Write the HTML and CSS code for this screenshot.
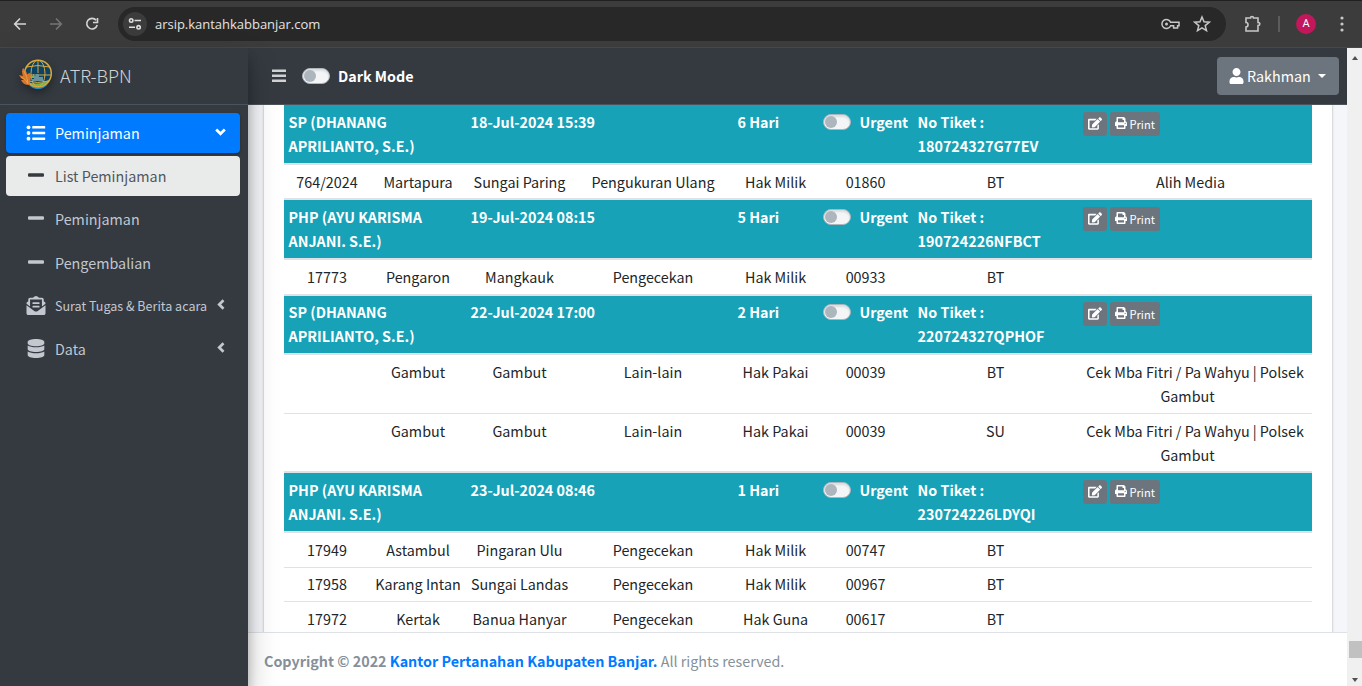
FILE: index.html
```html
<!DOCTYPE html>
<html lang="id">
<head>
<meta charset="utf-8">
<title>ATR-BPN</title>
<link rel="stylesheet" href="styles.css">
</head>
<body>
<svg class="sprite" width="0" height="0">
  <symbol id="user" viewBox="0 0 448 512"><path d="M224 256c70.7 0 128-57.3 128-128S294.7 0 224 0 96 57.3 96 128s57.3 128 128 128zm89.6 32h-16.7c-22.2 10.2-46.9 16-72.9 16s-50.6-5.8-72.9-16h-16.7C60.2 288 0 348.2 0 422.4V464c0 26.5 21.5 48 48 48h352c26.5 0 48-21.5 48-48v-41.6c0-74.2-60.2-134.4-134.4-134.4z"/></symbol>
  <symbol id="edit" viewBox="0 0 576 512"><path d="M402.6 83.2l90.2 90.2c3.8 3.8 3.8 10 0 13.8L274.4 405.6l-92.8 10.3c-12.4 1.4-22.9-9.1-21.5-21.5l10.3-92.8L388.8 83.2c3.8-3.8 10-3.8 13.8 0zm162-22.9l-48.8-48.8c-15.2-15.2-39.9-15.2-55.2 0l-35.4 35.4c-3.8 3.8-3.8 10 0 13.8l90.2 90.2c3.8 3.8 10 3.8 13.8 0l35.4-35.4c15.2-15.3 15.2-40 0-55.2zM384 346.2V448H64V128h229.8c3.2 0 6.2-1.3 8.5-3.5l40-40c7.6-7.6 2.2-20.5-8.500-20.500H48C21.500 64 0 85.500 0 112v352c0 26.500 21.500 48 48 48h352c26.500 0 48-21.500 48-48V306.200c0-10.700-12.900-16-20.500-8.500l-40 40c-2.200 2.300-3.500 5.300-3.500 8.500z"/></symbol>
  <symbol id="print" viewBox="0 0 512 512"><path d="M448 192V77.25c0-8.49-3.37-16.62-9.37-22.63L393.37 9.37c-6-6-14.14-9.37-22.63-9.37H96C78.33 0 64 14.33 64 32v160c-35.35 0-64 28.65-64 64v112c0 8.84 7.16 16 16 16h48v96c0 17.67 14.33 32 32 32h320c17.67 0 32-14.33 32-32v-96h48c8.84 0 16-7.16 16-16V256c0-35.35-28.65-64-64-64zm-64 256H128v-96h256v96zm0-224H128V64h192v48c0 8.84 7.16 16 16 16h48v96zm48 72c-13.25 0-24-10.75-24-24 0-13.26 10.75-24 24-24s24 10.74 24 24c0 13.25-10.75 24-24 24z"/></symbol>
  <symbol id="database" viewBox="0 0 448 512"><path d="M448 73.143v45.714C448 159.143 347.667 192 224 192S0 159.143 0 118.857V73.143C0 32.857 100.333 0 224 0s224 32.857 224 73.143zM448 176v102.857C448 319.143 347.667 352 224 352S0 319.143 0 278.857V176c48.125 33.143 136.208 48.572 224 48.572S399.874 209.143 448 176zm0 160v102.857C448 479.143 347.667 512 224 512S0 479.143 0 438.857V336c48.125 33.143 136.208 48.572 224 48.572S399.874 369.143 448 336z"/></symbol>
  <symbol id="letter" viewBox="0 0 512 512"><path d="M176 216h160c8.84 0 16-7.16 16-16v-16c0-8.84-7.16-16-16-16H176c-8.84 0-16 7.16-16 16v16c0 8.84 7.16 16 16 16zm-16 80c0 8.84 7.16 16 16 16h160c8.84 0 16-7.16 16-16v-16c0-8.84-7.16-16-16-16H176c-8.84 0-16 7.16-16 16v16zm96 121.13c-16.42 0-32.84-5.06-46.86-15.19L0 250.86V464c0 26.51 21.49 48 48 48h416c26.51 0 48-21.49 48-48V250.86L302.86 401.94c-14.02 10.12-30.44 15.19-46.86 15.19zm237.61-254.18c-8.85-6.94-17.24-13.47-29.61-22.81V96c0-26.51-21.49-48-48-48h-77.55c-3.04-2.2-5.87-4.26-9.04-6.56C312.6 29.17 279.2-.35 256 0c-23.2-.35-56.59 29.17-73.41 41.44-3.17 2.3-6 4.36-9.04 6.56H96c-26.51 0-48 21.49-48 48v44.14c-12.37 9.33-20.76 15.87-29.61 22.81A47.995 47.995 0 0 0 0 200.72v10.65l96 69.35V96h320v184.72l96-69.35v-10.65c0-14.74-6.78-28.67-18.39-37.77z"/></symbol>
  <symbol id="list" viewBox="0 0 19 16"><circle cx="2" cy="2.3" r="1.9"/><circle cx="2" cy="8" r="1.9"/><circle cx="2" cy="13.7" r="1.9"/><rect x="5.7" y="1.1" width="13" height="2.4" rx=".6"/><rect x="5.7" y="6.8" width="13" height="2.4" rx=".6"/><rect x="5.7" y="12.5" width="13" height="2.4" rx=".6"/></symbol>
  <symbol id="minus" viewBox="0 0 16 16"><rect x="0" y="5.2" width="16" height="3.6" rx="1.1"/></symbol>
  <symbol id="angle" viewBox="0 0 10 12"><path d="M7.500 1.200 3.200 5.500l4.300 4.300" fill="none" stroke="currentColor" stroke-width="2.700"/></symbol>
  <symbol id="bars" viewBox="0 0 14 14"><rect y="0.500" width="14" height="2.500"/><rect y="5.500" width="14" height="2.500"/><rect y="10.500" width="14" height="2.500"/></symbol>
</svg>

<header class="browser">
  <svg class="nav-icons" width="120" height="46" viewBox="0 0 120 46" fill="none" stroke-width="1.6">
    <path d="M26 23H15M20 17.500 14.700 23l5.300 5.500" stroke="#d5d5d5"/>
    <path d="M50 23h11M56 17.500l5.300 5.500-5.300 5.500" stroke="#757575"/>
    <path d="M96.200 19.300A5.300 5.300 0 1 0 97.200 24" stroke="#d5d5d5"/><path d="M97.500 17v4.500H93" stroke="#d5d5d5"/>
  </svg>
  <div class="address">
    <span class="site">
      <svg width="14" height="14" viewBox="0 0 14 14" fill="none" stroke="#dedede" stroke-width="1.6"><circle cx="3.200" cy="3.500" r="1.700"/><path d="M6.500 3.500H13M1 10.300h6"/><circle cx="10.600" cy="10.300" r="1.700"/></svg>
    </span>
    <span class="url">arsip.kantahkabbanjar.com</span>
    <svg class="key" width="19" height="12" viewBox="0 0 19 12" fill="none" stroke="#c7c7c7" stroke-width="1.500"><path d="M9.600 4.300A4.500 4.500 0 1 0 9.600 7.700h3V10h4V7.700H18V4.300z"/><circle cx="5.500" cy="6" r="1.500" fill="#c7c7c7" stroke="none"/></svg>
    <svg class="star" width="18" height="18" viewBox="0 0 18 18" fill="none" stroke="#c7c7c7" stroke-width="1.500"><path d="m9 2 2 4.800 5.200.4-4 3.400 1.300 5L9 12.900l-4.500 2.700 1.300-5-4-3.400L7 6.800z"/></svg>
  </div>
  <svg class="puzzle" width="18" height="18" viewBox="0 0 18 18" fill="none" stroke="#c7c7c7" stroke-width="1.600"><path d="M2 3h4.500c0-2 3-2 3 0H14v4.500c2.400 0 2.400 3 0 3V16H2v-4c2.700 0 2.700-4.500 0-4.500z"/></svg>
  <span class="split"></span>
  <span class="avatar">A</span>
  <svg class="dots" width="4" height="16" viewBox="0 0 4 16" fill="#c7c7c7"><circle cx="2" cy="2" r="1.600"/><circle cx="2" cy="8" r="1.600"/><circle cx="2" cy="14" r="1.600"/></svg>
</header>

<div class="app">
  <aside class="sidebar">
    <div class="brand">
      <svg class="logo" width="34" height="32" viewBox="0 0 34 32">
        <circle cx="20" cy="14.500" r="13.500" fill="#0c4265"/>
        <path d="M10 25q10 5 20 0-4 5-10 5-6 0-10-5z" fill="#2a91c8"/>
        <path d="M8 22q12 6 24-2-5 7.500-12 7-7 0-12-5z" fill="#76b64b"/>
        <g fill="none" stroke="#d8a83c" stroke-width="1"><circle cx="20" cy="14.500" r="13.300" stroke-width="1.500"/><ellipse cx="20" cy="14.500" rx="7" ry="13.300"/><path d="M20 1v13M8.500 8q11.500-3 23 0M7 16h26M9 22q10 3 22 0"/></g>
        <path d="M14 20h2v-3h2v-2h3v3h4v4H14z" fill="#69949b"/>
        <path d="M12 17h3v-2h1v4h-4z" fill="#7ab648"/>
        <path d="M5 9q4 3 4 7 1-2 3-2 2 6-1 12Q5 26 3 21l3 0Q2 19 1 16l4 1Q3 12 5 9z" fill="#d8752c"/>
        <path d="M3 18q5 2 7 7M6 12q3 5 4 12" stroke="#e7b64f" stroke-width=".7" fill="none"/>
      </svg>
      <span>ATR-BPN</span>
    </div>
    <nav class="menu">
      <a class="item active"><svg class="ico" width="19" height="16"><use href="#list"/></svg><span>Peminjaman</span><svg class="caret down" width="10" height="12"><use href="#angle"/></svg></a>
      <a class="item current"><svg class="ico" width="16" height="16"><use href="#minus"/></svg><span>List Peminjaman</span></a>
      <a class="item"><svg class="ico" width="16" height="16"><use href="#minus"/></svg><span>Peminjaman</span></a>
      <a class="item"><svg class="ico" width="16" height="16"><use href="#minus"/></svg><span>Pengembalian</span></a>
      <a class="item small"><svg class="ico" width="19" height="19"><use href="#letter"/></svg><span>Surat Tugas &amp; Berita acara</span><svg class="caret" width="10" height="12"><use href="#angle"/></svg></a>
      <a class="item"><svg class="ico" width="17" height="19"><use href="#database"/></svg><span>Data</span><svg class="caret" width="10" height="12"><use href="#angle"/></svg></a>
    </nav>
  </aside>

  <div class="main">
    <div class="topbar">
      <svg class="bars" width="14" height="14"><use href="#bars"/></svg>
      <span class="switch"></span><b>Dark Mode</b>
      <button class="user"><svg width="15" height="16"><use href="#user"/></svg>Rakhman<i class="tri"></i></button>
    </div>
    <div class="content">
      <div class="card">
        <table>
          <colgroup><col class="c1"><col class="c2"><col class="c3"><col class="c4"><col class="c5"><col class="c6"><col class="c7"><col class="c8"></colgroup>
          <tbody>
          <tr class="head"><td colspan="2">SP (DHANANG<br>APRILIANTO, S.E.)</td><td colspan="2">18-Jul-2024 15:39</td><td>6 Hari</td><td><div class="urgent"><span class="switch"></span>Urgent</div></td><td>No Tiket :<br>180724327G77EV</td><td><div class="actions"><button><svg width="14" height="13"><use href="#edit"/></svg></button><button><svg width="12" height="12"><use href="#print"/></svg>Print</button></div></td></tr>
          <tr class="thick h35"><td>764/2024</td><td>Martapura</td><td>Sungai Paring</td><td>Pengukuran Ulang</td><td>Hak Milik</td><td>01860</td><td>BT</td><td><span class="short">Alih Media</span></td></tr>
          <tr class="head"><td colspan="2">PHP (AYU KARISMA<br>ANJANI. S.E.)</td><td colspan="2">19-Jul-2024 08:15</td><td>5 Hari</td><td><div class="urgent"><span class="switch"></span>Urgent</div></td><td>No Tiket :<br>190724226NFBCT</td><td><div class="actions"><button><svg width="14" height="13"><use href="#edit"/></svg></button><button><svg width="12" height="12"><use href="#print"/></svg>Print</button></div></td></tr>
          <tr class="thick h36"><td>17773</td><td>Pengaron</td><td>Mangkauk</td><td>Pengecekan</td><td>Hak Milik</td><td>00933</td><td>BT</td><td></td></tr>
          <tr class="head h59"><td colspan="2">SP (DHANANG<br>APRILIANTO, S.E.)</td><td colspan="2">22-Jul-2024 17:00</td><td>2 Hari</td><td><div class="urgent"><span class="switch"></span>Urgent</div></td><td>No Tiket :<br>220724327QPHOF</td><td><div class="actions"><button><svg width="14" height="13"><use href="#edit"/></svg></button><button><svg width="12" height="12"><use href="#print"/></svg>Print</button></div></td></tr>
          <tr class="thick h60"><td></td><td>Gambut</td><td>Gambut</td><td>Lain-lain</td><td>Hak Pakai</td><td>00039</td><td>BT</td><td>Cek Mba Fitri / Pa Wahyu | Polsek<br><span class="last">Gambut</span></td></tr>
          <tr class="h58"><td></td><td>Gambut</td><td>Gambut</td><td>Lain-lain</td><td>Hak Pakai</td><td>00039</td><td>SU</td><td>Cek Mba Fitri / Pa Wahyu | Polsek<br><span class="last">Gambut</span></td></tr>
          <tr class="head"><td colspan="2">PHP (AYU KARISMA<br>ANJANI. S.E.)</td><td colspan="2">23-Jul-2024 08:46</td><td>1 Hari</td><td><div class="urgent"><span class="switch"></span>Urgent</div></td><td>No Tiket :<br>230724226LDYQI</td><td><div class="actions"><button><svg width="14" height="13"><use href="#edit"/></svg></button><button><svg width="12" height="12"><use href="#print"/></svg>Print</button></div></td></tr>
          <tr class="thick h36"><td>17949</td><td>Astambul</td><td>Pingaran Ulu</td><td>Pengecekan</td><td>Hak Milik</td><td>00747</td><td>BT</td><td></td></tr>
          <tr class="h34"><td>17958</td><td>Karang Intan</td><td>Sungai Landas</td><td>Pengecekan</td><td>Hak Milik</td><td>00967</td><td>BT</td><td></td></tr>
          <tr class="h36"><td>17972</td><td>Kertak</td><td>Banua Hanyar</td><td>Pengecekan</td><td>Hak Guna</td><td>00617</td><td>BT</td><td></td></tr>
          </tbody>
        </table>
      </div>
    </div>
    <footer><b>Copyright © 2022 <a>Kantor Pertanahan Kabupaten Banjar.</a></b> All rights reserved.</footer>
  </div>

  <div class="scrollbar"><i class="up"></i><i class="thumb"></i><i class="dn"></i></div>
</div>
</body>
</html>
```
FILE: styles.css
```css
* { box-sizing: border-box; }
body {
  margin: 0; width: 1362px; height: 686px; overflow: hidden;
  font: 14.33px/24px "Noto Sans CJK SC", "Noto Sans", sans-serif; color: #212529;
  display: flex; flex-direction: column;
}
svg { display: block; fill: currentColor; flex: none; }
.sprite { position: absolute; }
button { font: inherit; color: #fff; border: 0; background: #6c757d; display: flex; align-items: center; }

.browser {
  height: 48px; flex: none; background: #3c3c3c; border-top: 1px solid #202020; border-bottom: 1px solid #484848;
  display: flex; align-items: center; padding-right: 18px;
}
.nav-icons { margin-right: -2px; fill: none; }
.address { width: 1108px; height: 34px; border-radius: 17px; background: #282828; display: flex; align-items: center; padding: 0 15px 0 5px; }
.site { width: 24px; height: 24px; border-radius: 50%; background: #3c3c3c; display: grid; place-items: center; }
.site svg, .key, .star, .puzzle { fill: none; }
.url { font: 13px/20px "Open Sans", sans-serif; letter-spacing: -.02px; color: #e3e3e3; margin-left: 8px; }
.key { margin-left: auto; margin-right: 13px; }
.puzzle { margin-left: 18px; }
.split { width: 2px; height: 16px; background: #5c5c5c; margin-left: 16px; }
.avatar { width: 20px; height: 20px; border-radius: 50%; background: #c2185b; color: #fff; font: 11px/20px Roboto, sans-serif; text-align: center; margin-left: 16px; }
.dots { margin-left: auto; fill: #c7c7c7; }

.app { display: flex; flex: 1; min-height: 0; }
.sidebar { width: 248px; flex: none; background: #343a40; color: #c2c7d0; position: relative; z-index: 2; box-shadow: 0 14px 28px rgba(0,0,0,.25), 0 10px 10px rgba(0,0,0,.22); }
.brand { height: 57px; border-bottom: 1px solid #4b545c; display: flex; align-items: center; padding: 0 0 2px 18px; gap: 8px; font-size: 18px; font-weight: 300; color: #d0d3d6; }
.logo { filter: drop-shadow(0 4px 4px rgba(0,0,0,.35)); }
.menu { padding: 8px 8px 0 6px; display: flex; flex-direction: column; gap: 3.200px; }
.item { height: 40px; border-radius: 4px; display: flex; align-items: center; position: relative; }
.item .ico { width: 32px; margin: 0 3px 0 14px; }
.item.active { background: #007bff; color: #fff; box-shadow: 0 1px 3px rgba(0,0,0,.24); }
.item.current { background: #e9ebea; color: #343a40; }
.item.current span { color: #50565c; }
.item.small { font-size: 12.540px; }
.item.small span { padding-top: 1px; }
.caret { margin: -2px 14px 0 auto; }
.down { transform: rotate(-90deg); }

.main { flex: 1; min-width: 0; display: flex; flex-direction: column; background: #f4f6f9; }
.topbar { height: 57px; flex: none; background: #343a40; border-bottom: 1px solid #4b545c; display: flex; align-items: center; padding: 0 8px 0 24px; color: #fff; }
.bars { color: #cfd1d3; }
.switch { width: 28px; height: 16px; border-radius: 8px; background: #f4f5f7; border: 1px solid #adb5bd; display: flex; align-items: center; padding-left: 1px; box-shadow: inset 0 2px 2px rgba(0,0,0,.1); }
.switch::before { content: ""; width: 12px; height: 12px; border-radius: 50%; background: #adb5bd; }
.topbar .switch { margin: 0 8px 0 16px; }
.user { margin-left: auto; height: 38px; width: 122px; border-radius: 4px; padding: 0 0 0 12px; gap: 3px; }
.tri { border: 4.500px solid transparent; border-top-color: #fff; border-bottom: 0; margin-left: 4px; }

.content { flex: 1; min-height: 0; overflow: hidden; padding: 0 15px 0 16px; }
.card { background: #fff; padding: 0 20px; height: 600px; margin-top: -2px; box-shadow: 0 0 1px rgba(0,0,0,.2), 0 1px 3px rgba(0,0,0,.2); }
table { width: 1028px; table-layout: fixed; border-collapse: separate; border-spacing: 0; }
.c1 { width: 86px; } .c2 { width: 96px; } .c3 { width: 107px; } .c4 { width: 160px; }
.c5 { width: 85px; } .c6 { width: 95px; } .c7 { width: 165px; } .c8 { width: 234px; }
td { padding: 5px 4.500px 0; vertical-align: top; text-align: center; border-top: 1px solid #dee2e6; white-space: nowrap; }
.thick td { border-top-width: 2px; }
.head td { height: 60px; border-top-width: 2px; background: #17a2b8; color: #fff; font-weight: 700; text-align: left; background-clip: padding-box; }
.head.h59 td { height: 59px; padding-top: 4px; }
.h34 td { height: 34px; padding-top: 4px; } .h35 td { height: 35px; } .h36 td { height: 36px; } .h58 td { height: 58px; } .h60 td { height: 60px; }
.short { padding-right: 9px; } .last { padding-right: 15px; }
.urgent { display: flex; align-items: center; gap: 9px; }
.urgent .switch { margin-top: -1px; }
.actions { display: flex; gap: 3px; padding-top: 2px; }
.actions button { height: 24px; border-radius: 3px; padding: 0 5px; font-size: 11.100px; font-weight: 400; gap: 3px; }
.actions svg { margin-top: -1px; }
.actions button { line-height: 22px; padding-bottom: 1px; }

footer { height: 54px; flex: none; background: #fff; border-top: 1px solid #dee2e6; color: #869099; padding: 16px; }
footer a { color: #007bff; }

.scrollbar { width: 15px; flex: none; background: #f0f0f0; display: flex; flex-direction: column; align-items: center; padding: 8px 0 4px; }
.up, .dn { border: 3.500px solid transparent; }
.up { border-bottom: 4px solid #505050; border-top: 0; }
.dn { border-top: 4px solid #505050; border-bottom: 0; margin-top: 20px; }
.thumb { width: 13px; height: 17px; background: #c1c1c1; margin-top: auto; align-self: flex-end; }
```
